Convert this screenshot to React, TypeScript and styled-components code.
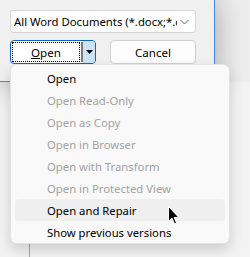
import React from "react";
import styled, { createGlobalStyle } from "styled-components";

const GlobalStyle = createGlobalStyle`
  html, body {
    margin: 0;
    padding: 0;
    background: #f3f3f3;
  }
  * {
    box-sizing: border-box;
  }
`;

const Stage = styled.div`
  width: 250px;
  height: 257px;
  position: relative;
  overflow: hidden;
  display: flex;
  flex-direction: column;
  background: #ededed;
  font-family: "Noto Sans", "Open Sans", sans-serif;
  font-size: 11.3px;
  color: #000;
`;

const Dialog = styled.div`
  position: relative;
  z-index: 1;
  width: 215px;
  height: 82px;
  flex: none;
  background: #f0f0f0;
  border-right: 1px solid #3b8ee6;
  border-bottom: 1px solid #3b8ee6;
  box-shadow: 0 0 30px rgba(0, 0, 0, 0.32);
  padding: 10px 0 0 10px;
  display: flex;
  flex-direction: column;
  gap: 7px;
`;

const LowerPane = styled.div`
  flex: 1;
  background: #f3f3f3;
  padding-left: 29px;
  display: flex;
`;

const PaneLine = styled.div`
  width: 1px;
  background: #a8a8a8;
`;

const Select = styled.div`
  width: 186px;
  height: 23px;
  background: #fff;
  border: 1px solid #d6d6d6;
  border-radius: 3px;
  display: flex;
  align-items: center;
  padding: 0 6px 0 3px;
  gap: 3px;
`;

const SelectText = styled.span`
  flex: 1;
  white-space: nowrap;
  overflow: hidden;
  line-height: 21px;
`;

const ButtonRow = styled.div`
  display: flex;
  gap: 14px;
  height: 24px;
  font-size: 11.6px;
`;

const SplitButton = styled.div`
  width: 86px;
  height: 24px;
  border: 1px solid #0b66c3;
  border-radius: 4px;
  background: #fff;
  display: flex;
  overflow: hidden;
`;

const MainPart = styled.div`
  flex: 1;
  margin: 1px;
  border: 1px dotted #000;
  display: flex;
  align-items: center;
  justify-content: center;
`;

const Separator = styled.div`
  width: 2px;
  background: #7a7a7a;
  margin: 1px 0;
`;

const ArrowPart = styled.div`
  width: 12px;
  background: #cce4f7;
  display: flex;
  align-items: center;
  justify-content: center;
`;

const Button = styled.div`
  width: 86px;
  height: 24px;
  background: #fdfdfd;
  border: 1px solid #d0d0d0;
  border-radius: 4px;
  display: flex;
  align-items: center;
  justify-content: center;
`;

const Mnemonic = styled.span`
  text-decoration: underline;
`;

const Menu = styled.div`
  position: absolute;
  z-index: 2;
  left: 10px;
  top: 64px;
  width: 220px;
  background: #f9f9f9;
  border: 1px solid #e2e2e2;
  border-radius: 7px;
  box-shadow: 0 6px 14px rgba(0, 0, 0, 0.16);
  padding: 2px 4px 0;
  display: flex;
  flex-direction: column;
`;

const MenuItem = styled.div<{ $disabled?: boolean; $hover?: boolean }>`
  height: 22px;
  padding-left: 32px;
  display: flex;
  align-items: center;
  border-radius: 4px;
  white-space: nowrap;
  color: ${(p) => (p.$disabled ? "#a2a2a2" : "#000")};
  background: ${(p) => (p.$hover ? "#efefef" : "transparent")};
`;

const Cursor = styled.svg`
  position: absolute;
  z-index: 3;
  left: 168px;
  top: 206px;
`;

const items = [
  { label: "Open" },
  { label: "Open Read-Only", disabled: true },
  { label: "Open as Copy", disabled: true },
  { label: "Open in Browser", disabled: true },
  { label: "Open with Transform", disabled: true },
  { label: "Open in Protected View", disabled: true },
  { label: "Open and Repair", hover: true },
  { label: "Show previous versions" },
];

export default function App() {
  return (
    <>
      <GlobalStyle />
      <Stage>
        <Dialog>
          <Select>
            <SelectText>All Word Documents (*.docx;*.c</SelectText>
            <svg width="9" height="6" viewBox="0 0 9 6">
              <path d="M0.5 1 L4.5 5 L8.5 1" fill="none" stroke="#606060" strokeWidth="1" />
            </svg>
          </Select>
          <ButtonRow>
            <SplitButton>
              <MainPart>
                <span>
                  <Mnemonic>O</Mnemonic>pen
                </span>
              </MainPart>
              <Separator />
              <ArrowPart>
                <svg width="7" height="4" viewBox="0 0 7 4">
                  <path d="M0 0 L7 0 L3.5 4 Z" fill="#000" />
                </svg>
              </ArrowPart>
            </SplitButton>
            <Button>Cancel</Button>
          </ButtonRow>
        </Dialog>
        <LowerPane>
          <PaneLine />
        </LowerPane>
        <Menu>
          {items.map((item, index) => (
            <MenuItem key={index} $disabled={item.disabled} $hover={item.hover}>
              {item.label}
            </MenuItem>
          ))}
        </Menu>
        <Cursor width="12" height="19" viewBox="0 0 12 19">
          <path
            d="M0.5 0.5 L0.5 15.5 L4 12.2 L6.6 18 L8.6 17.1 L6.1 11.4 L10.8 11.4 Z"
            fill="#000"
            stroke="#fff"
            strokeWidth="1"
            strokeLinejoin="round"
          />
        </Cursor>
      </Stage>
    </>
  );
}
